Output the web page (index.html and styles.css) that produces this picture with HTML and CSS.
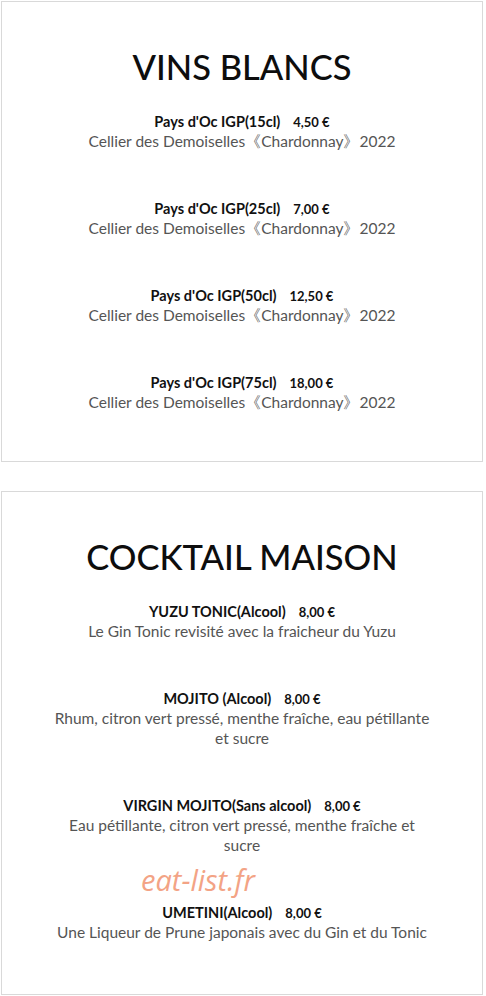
FILE: index.html
```html
<!DOCTYPE html>
<html lang="fr">
<head>
<meta charset="utf-8">
<title>Menu</title>
<link rel="stylesheet" href="styles.css">
</head>
<body>
<section class="card">
  <h2 class="title">VINS BLANCS</h2>
  <div class="items">
    <div class="item">
      <div class="name">Pays d'Oc IGP(15cl)<span class="price">4,50 €</span></div>
      <p class="desc">Cellier des Demoiselles《Chardonnay》2022</p>
    </div>
    <div class="item">
      <div class="name">Pays d'Oc IGP(25cl)<span class="price">7,00 €</span></div>
      <p class="desc">Cellier des Demoiselles《Chardonnay》2022</p>
    </div>
    <div class="item">
      <div class="name">Pays d'Oc IGP(50cl)<span class="price">12,50 €</span></div>
      <p class="desc">Cellier des Demoiselles《Chardonnay》2022</p>
    </div>
    <div class="item">
      <div class="name">Pays d'Oc IGP(75cl)<span class="price">18,00 €</span></div>
      <p class="desc">Cellier des Demoiselles《Chardonnay》2022</p>
    </div>
  </div>
</section>
<section class="card card-cocktail">
  <h2 class="title">COCKTAIL MAISON</h2>
  <div class="items">
    <div class="item">
      <div class="name">YUZU TONIC(Alcool)<span class="price">8,00 €</span></div>
      <p class="desc">Le Gin Tonic revisité avec la fraicheur du Yuzu</p>
    </div>
    <div class="item">
      <div class="name">MOJITO (Alcool)<span class="price">8,00 €</span></div>
      <p class="desc">Rhum, citron vert pressé, menthe fraîche, eau pétillante et sucre</p>
    </div>
    <div class="item">
      <div class="name">VIRGIN MOJITO(Sans alcool)<span class="price">8,00 €</span></div>
      <p class="desc">Eau pétillante, citron vert pressé, menthe fraîche et sucre</p>
    </div>
    <div class="item">
      <div class="name">UMETINI(Alcool)<span class="price">8,00 €</span></div>
      <p class="desc">Une Liqueur de Prune japonais avec du Gin et du Tonic</p>
    </div>
  </div>
  <span class="watermark">eat-list.fr</span>
</section>
</body>
</html>
```
FILE: styles.css
```css
* { box-sizing: border-box; }

html, body {
  margin: 0;
  background: #ffffff;
}

body {
  padding: 1px 3px 0 1px;
  font-family: Lato, "Noto Sans", "DejaVu Sans", sans-serif;
  color: #111111;
}

.card {
  position: relative;
  border: 1px solid #d9d9d9;
  padding: 43px 0 49px;
  margin-bottom: 29px;
  display: flex;
  flex-direction: column;
  align-items: center;
}

.card-cocktail {
  padding-bottom: 52px;
}

.title {
  margin: 0;
  font-size: 34.5px;
  line-height: 44px;
  font-weight: 500;
  letter-spacing: 0;
  color: #0d0d0d;
  text-align: center;
}

.items {
  margin-top: 24px;
  display: flex;
  flex-direction: column;
  gap: 49px;
  align-items: center;
  width: 100%;
}

.item {
  display: flex;
  flex-direction: column;
  align-items: center;
  text-align: center;
  max-width: 380px;
}

.name {
  font-size: 14.5px;
  line-height: 18px;
  font-weight: 700;
  color: #111111;
}

.price {
  margin-left: 13px;
  font-size: 13px;
}

.desc {
  margin: 0;
  font-size: 15.5px;
  line-height: 20px;
  color: #555555;
  font-weight: 400;
}

.watermark {
  position: absolute;
  left: 139px;
  top: 370px;
  font-family: "Open Sans", "Noto Sans", sans-serif;
  font-style: italic;
  font-size: 29px;
  line-height: 36px;
  color: #f3a385;
}
```
